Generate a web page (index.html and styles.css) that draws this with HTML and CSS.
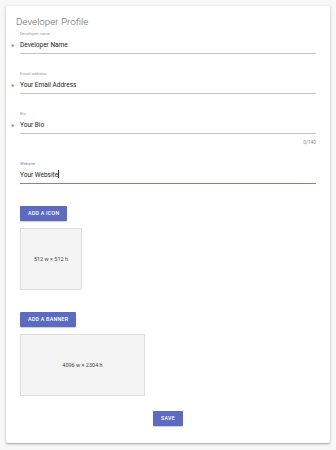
FILE: index.html
```html
<!DOCTYPE html>
<html>

<head>
    <title>Developer Profile</title>
    <link rel="stylesheet" href="styles.css">
</head>

<body>
    <div class="card">
        <h1 class="title">Developer Profile</h1>

        <div class="field">
            <div class="label">Developer name</div>
            <div class="star">*</div>
            <div class="input">Developer Name</div>
        </div>

        <div class="field">
            <div class="label">Email address</div>
            <div class="star">*</div>
            <div class="input">Your Email Address</div>
        </div>

        <div class="field">
            <div class="label">Bio</div>
            <div class="star">*</div>
            <div class="input">Your Bio</div>
        </div>
        <div class="counter">0/140</div>

        <div class="field focused">
            <div class="label">Website</div>
            <div class="input">Your Website<span class="caret"></span></div>
        </div>

        <div class="upload">
            <div class="button">Add a icon</div>
            <div class="preview icon">512 w × 512 h</div>
        </div>

        <div class="upload">
            <div class="button">Add a banner</div>
            <div class="preview banner">4096 w × 2304 h</div>
        </div>

        <div class="actions">
            <div class="button">Save</div>
        </div>
    </div>
</body>

</html>
```

FILE: styles.css
```css
body {
    margin: 0;
    padding: 6px;
    background-color: #f7f7f7;
    font-family: Roboto, "Liberation Sans", sans-serif;
}

.card {
    background-color: white;
    box-shadow: 0 1px 3px rgba(0, 0, 0, 0.25), 0 1px 1px rgba(0, 0, 0, 0.12);
    border-radius: 2px;
    padding: 10px 14px 17px 5px;
    display: flex;
    flex-direction: column;
}

.title {
    margin: 0 0 0 5px;
    font-size: 9.8px;
    line-height: 12px;
    font-weight: 300;
    color: #666;
}

.field {
    display: grid;
    grid-template-columns: 9px 1fr;
    margin-top: 3px;
}

.field + .field {
    margin-top: 17px;
}

.label {
    grid-column: 2;
    font-size: 4.2px;
    line-height: 6px;
    color: #9e9e9e;
}

.star {
    grid-column: 1;
    grid-row: 2;
    font-size: 8px;
    line-height: 10px;
    padding-top: 5px;
    color: #c9604f;
}

.input {
    grid-column: 2;
    grid-row: 2;
    margin-top: 3px;
    padding-bottom: 3px;
    border-bottom: 1px solid #c4c4c4;
    font-size: 6.5px;
    line-height: 10px;
    color: #222;
}

.focused {
    margin-top: 15px;
}

.focused .label {
    color: #7986cb;
}

.focused .input {
    border-bottom-color: #7583c6;
}

.caret {
    display: inline-block;
    width: 0;
    height: 8px;
    border-left: 1px solid #333;
    vertical-align: -1px;
}

.counter {
    margin-top: 6px;
    text-align: right;
    font-size: 4.8px;
    line-height: 6px;
    color: #888;
}

.upload {
    margin-top: 22px;
    padding-left: 9px;
    display: flex;
    flex-direction: column;
    align-items: flex-start;
    gap: 7px;
}

.button {
    background-color: #5c6bc0;
    color: white;
    font-size: 5.3px;
    font-weight: 500;
    letter-spacing: 0.25px;
    text-transform: uppercase;
    line-height: 15px;
    padding: 0 8px;
    border-radius: 1px;
    box-shadow: 0 1px 1px rgba(0, 0, 0, 0.2);
}

.preview {
    background-color: #f4f4f4;
    border: 1px solid #dedede;
    box-sizing: border-box;
    height: 62px;
    display: flex;
    align-items: center;
    justify-content: center;
    font-size: 5.5px;
    color: #444;
}

.icon {
    width: 62px;
}

.banner {
    width: 125px;
}

.actions {
    margin-top: 15px;
    padding-left: 9px;
    display: flex;
    justify-content: center;
}
```
